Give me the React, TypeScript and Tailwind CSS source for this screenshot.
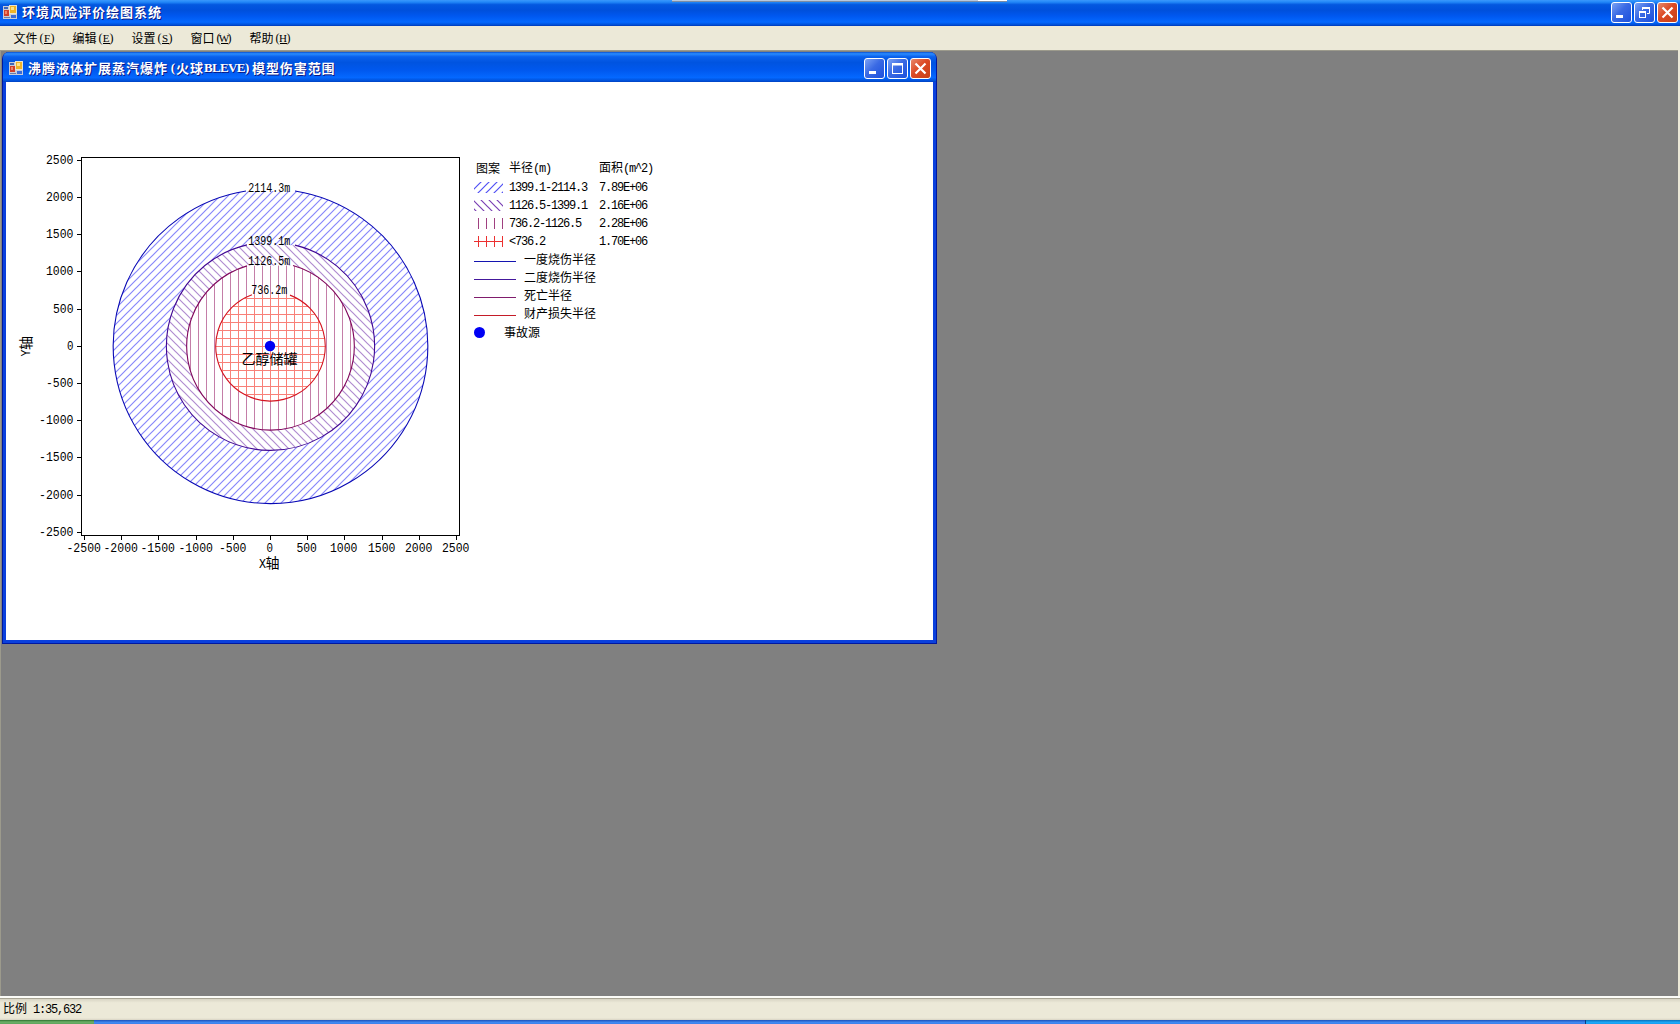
import React from "react";

const CJK = /([\u3000-\u9fff]+)/;

/* Mixed text: full-width CJK runs and half-width latin runs. */
function Mixed({ text }: { text: string }) {
  return (
    <span className="whitespace-pre font-['Noto_Sans_CJK_SC',sans-serif] text-[12px] leading-[14px]">
      {text.split(CJK).map((run, i) =>
        run === "" ? null : CJK.test(run) ? (
          <span key={i}>{run}</span>
        ) : (
          <span key={i} className="font-['Liberation_Mono',monospace] text-[12px] tracking-[-1.2px]">
            {run}
          </span>
        )
      )}
    </span>
  );
}

function AppIcon() {
  return (
    <svg width="14" height="14" viewBox="0 0 14 14" shapeRendering="crispEdges" className="shrink-0">
      <rect x="0" y="1" width="14" height="13" fill="#c8ccd8" />
      <rect x="1" y="5" width="5" height="6" fill="#d0402c" />
      <rect x="2" y="6" width="2" height="3" fill="#f08468" />
      <rect x="6" y="0" width="8" height="9" fill="#e8e4d0" />
      <rect x="7" y="1" width="6" height="7" fill="#f0b428" />
      <rect x="8" y="2" width="3" height="3" fill="#fce48c" />
      <rect x="8" y="10" width="5" height="3" fill="#3a6cd8" />
      <rect x="1" y="12" width="6" height="1" fill="#6c7ca8" />
      <rect x="1" y="2" width="4" height="2" fill="#4068b8" />
    </svg>
  );
}

type Kind = "min" | "restore" | "max" | "close";

function CaptionButton({ kind }: { kind: Kind }) {
  const skin =
    kind === "close"
      ? "bg-[linear-gradient(135deg,#e88a6c_0%,#dc4a24_45%,#c84018_100%)]"
      : "bg-[linear-gradient(135deg,#7ba2f4_0%,#3a6ae4_45%,#1c50dc_100%)]";
  return (
    <button className={`h-[21px] w-[21px] rounded-[3px] border border-white ${skin}`}>
      <svg width="19" height="19" viewBox="0 0 19 19" fill="none" stroke="#fff">
        {kind === "min" && <rect x="4" y="12" width="7" height="3" fill="#fff" stroke="none" />}
        {kind === "max" && (
          <>
            <rect x="4.5" y="4.5" width="10" height="10" />
            <path d="M4 5.5H15" strokeWidth="2" />
          </>
        )}
        {kind === "restore" && (
          <>
            <path d="M7.5 7V4.5H14.5V10.5H12" />
            <path d="M7 5H15" strokeWidth="2" />
            <rect x="4.5" y="8.5" width="6" height="6" />
            <path d="M4 9H11" strokeWidth="2" />
          </>
        )}
        {kind === "close" && <path d="M4.5 4.5L14.5 14.5M14.5 4.5L4.5 14.5" strokeWidth="2.2" />}
      </svg>
    </button>
  );
}

const MENUS = [
  ["文件", "F"],
  ["编辑", "E"],
  ["设置", "S"],
  ["窗口", "W"],
  ["帮助", "H"],
];

function MenuBar() {
  return (
    <div className="flex h-[24px] items-center bg-[#ece9d8] pl-[13.5px] text-black">
      {MENUS.map(([label, key]) => (
        <div key={key} className="flex w-[59px] items-center text-[12px] leading-[14px]">
          <span className="font-['Noto_Sans_CJK_SC',sans-serif]">{label}</span>
          <span className="w-[6px] text-right font-['Liberation_Serif',serif]">(</span>
          <span className="flex h-[12px] w-[7px] justify-center border-b border-black font-['Liberation_Serif',serif] text-[11px] leading-[12px]">
            {key}
          </span>
          <span className="w-[6px] font-['Liberation_Serif',serif]">)</span>
        </div>
      ))}
    </div>
  );
}

const CX = 270.5;
const CY = 346.3;
const SCALE = 0.0744;

const RINGS = [
  { r: 2114.3, gapL: 246, gapR: 295, stroke: "#0808b4", fill: "url(#hatchBlue)", base: 192 },
  { r: 1399.1, gapL: 247, gapR: 295, stroke: "#400894", fill: "url(#hatchPurple)", base: 245 },
  { r: 1126.5, gapL: 247, gapR: 293, stroke: "#80085c", fill: "url(#hatchWine)", base: 265 },
  { r: 736.2, gapL: 252, gapR: 290, stroke: "#d41420", fill: "url(#hatchRed)", base: 294 },
];

/* Circle outline left open at the top, where its label stands. */
function openCircle(radius: number, left: number, right: number) {
  const r = radius * SCALE;
  const y = (x: number) => CY - Math.sqrt(r * r - (x - CX) * (x - CX));
  return `M${right} ${y(right).toFixed(2)}A${r} ${r} 0 1 1 ${left} ${y(left).toFixed(2)}`;
}

const TICKS = [-2500, -2000, -1500, -1000, -500, 0, 500, 1000, 1500, 2000, 2500];

function Hatch({ id, color, d, crisp }: { id: string; color: string; d: string; crisp?: boolean }) {
  return (
    <pattern id={id} width="8" height="8" patternUnits="userSpaceOnUse">
      <path d={d} stroke={color} strokeWidth={crisp ? 1 : 1.2} fill="none" shapeRendering={crisp ? "crispEdges" : "auto"} />
    </pattern>
  );
}

const DIAG_UP = "M-2 10L10 -2M-2 2L2 -2M6 10L10 6";
const DIAG_DOWN = "M-2 -2L10 10M6 -2L10 2M-2 6L2 10";
const VERT = "M6.5 0V8";
const CROSS = "M6.5 0V8M0 2.5H8";

function Chart() {
  return (
    <svg width="465" height="556" viewBox="6 82 465 556" className="block shrink-0 overflow-visible">
      <defs>
        <Hatch id="hatchBlue" color="#8888fa" d={DIAG_UP} />
        <Hatch id="hatchPurple" color="#b08cd0" d={DIAG_DOWN} />
        <Hatch id="hatchWine" color="#c47ea8" d={VERT} crisp />
        <Hatch id="hatchRed" color="#f88078" d={CROSS} crisp />
        <Hatch id="keyBlue" color="#5050f4" d={DIAG_UP} />
        <Hatch id="keyPurple" color="#7a40b4" d={DIAG_DOWN} />
        <Hatch id="keyWine" color="#a04080" d={VERT} crisp />
        <Hatch id="keyRed" color="#ec3030" d={CROSS} crisp />
      </defs>
      <rect x="81.5" y="157.5" width="378" height="378" fill="none" stroke="#000" shapeRendering="crispEdges" />
      {RINGS.map((c) => {
        const d = openCircle(c.r, c.gapL, c.gapR);
        return (
          <g key={c.r}>
            <path d={d + "Z"} fill="#fff" />
            <path d={d + "Z"} fill={c.fill} />
            <path d={d} fill="none" stroke={c.stroke} strokeWidth="1.1" />
          </g>
        );
      })}
      <circle cx="270" cy="346" r="5.2" fill="#0000f4" />
      <g fontFamily="'Liberation Mono', monospace" fontSize="12">
        {RINGS.map((c) => {
          const s = `${c.r}m`;
          return (
            <text key={s} x={269.3 - s.length * 3} y={c.base} textLength={s.length * 6} lengthAdjust="spacingAndGlyphs">
              {s}
            </text>
          );
        })}
      </g>
      <g fontFamily="'Liberation Mono', monospace" fontSize="13">
        {TICKS.map((t) => {
          const s = String(t);
          const w = s.length * 7 - 0.5;
          const x = Math.floor(CX + t * SCALE) + 0.5;
          const y = Math.floor(CY - t * SCALE) + 0.5;
          return (
            <g key={t}>
              <path d={`M${x} 536V540M77 ${y}H81`} stroke="#000" shapeRendering="crispEdges" />
              <text x={x - w / 2 - 0.8} y="552" textLength={w} lengthAdjust="spacingAndGlyphs">
                {s}
              </text>
              <text x={73.5 - w} y={y + 3.4} textLength={w} lengthAdjust="spacingAndGlyphs">
                {s}
              </text>
            </g>
          );
        })}
      </g>
      <g fontFamily="'Liberation Mono', 'Noto Sans CJK SC', sans-serif" fontSize="14">
        <text x="241.5" y="363.5">乙醇储罐</text>
        <text x="259" y="568" fontSize="13" textLength="7" lengthAdjust="spacingAndGlyphs">X</text>
        <text x="265.5" y="568">轴</text>
        <g transform="translate(30.5 356.5) rotate(-90)">
          <text x="0" y="-0.5" fontSize="13" textLength="7" lengthAdjust="spacingAndGlyphs">Y</text>
          <text x="6.5" y="0">轴</text>
        </g>
      </g>
    </svg>
  );
}

const BANDS = [
  { fill: "url(#keyBlue)", top: 183, radius: "1399.1-2114.3", area: "7.89E+06" },
  { fill: "url(#keyPurple)", top: 201, radius: "1126.5-1399.1", area: "2.16E+06" },
  { fill: "url(#keyWine)", top: 219, radius: "736.2-1126.5", area: "2.28E+06" },
  { fill: "url(#keyRed)", top: 237, radius: "<736.2", area: "1.70E+06" },
];

const LINES = [
  { color: "bg-[#1414b0]", name: "一度烧伤半径" },
  { color: "bg-[#44189c]", name: "二度烧伤半径" },
  { color: "bg-[#801c6c]", name: "死亡半径" },
  { color: "bg-[#c41c28]", name: "财产损失半径" },
];

function Legend() {
  return (
    <div className="flex flex-col pl-[3px] pt-[76px] text-black">
      <div className="mb-px grid h-[19px] grid-cols-[35px_90px_80px] items-center">
        <span className="pl-[2px] leading-[0]"><Mixed text="图案" /></span>
        <span className="leading-[0]"><Mixed text="半径(m)" /></span>
        <span className="leading-[0]"><Mixed text="面积(m^2)" /></span>
      </div>
      {BANDS.map((b) => (
        <div key={b.area} className="grid h-[18px] grid-cols-[35px_90px_80px] items-center">
          <svg width="29" height="11" viewBox={`474 ${b.top} 29 11`} className="mt-px">
            <rect x="474" y={b.top} width="29" height="11" fill={b.fill} />
          </svg>
          <span className="leading-[0]"><Mixed text={b.radius} /></span>
          <span className="leading-[0]"><Mixed text={b.area} /></span>
        </div>
      ))}
      {LINES.map((l) => (
        <div key={l.name} className="flex h-[18px] items-center">
          <span className={`mt-[4px] h-px w-[42px] ${l.color}`} />
          <span className="pl-[8px] leading-[0]"><Mixed text={l.name} /></span>
        </div>
      ))}
      <div className="flex h-[20px] items-center">
        <span className="h-[11px] w-[11px] rounded-full bg-[#0000f4]" />
        <span className="pb-px pl-[19px] leading-[0]"><Mixed text="事故源" /></span>
      </div>
    </div>
  );
}

function ChildWindow() {
  return (
    <div className="flex h-[592px] w-[935px] flex-col rounded-t-[7px] border-x-[1px] border-b-[1px] border-[#0018a0] bg-[#0a48e0]">
      <div className="flex h-[30px] shrink-0 items-center rounded-t-[6px] bg-[linear-gradient(180deg,#0a50d0_0%,#2a8cff_6%,#0a60ec_16%,#0054e0_35%,#0058ee_60%,#0468ff_85%,#0050d8_96%,#0040c0_100%)] pl-[6px] pr-[5px] pt-[2px]">
        <AppIcon />
        <span className="flex whitespace-pre pl-[5px] font-['Noto_Sans_CJK_SC',sans-serif] text-[13px] font-bold leading-[18px] tracking-[1px] text-white [text-shadow:1px_1px_0_#0a1883]">
          <span>沸腾液体扩展蒸汽爆炸</span>
          <span className="w-[8px] text-right font-['Liberation_Serif',serif]">(</span>
          <span>火球</span>
          <span className="w-[41px] font-['Liberation_Serif',serif] text-[13px] tracking-[-0.7px]">BLEVE</span>
          <span className="w-[7px] font-['Liberation_Serif',serif]">)</span>
          <span className="tracking-[0.9px]">模型伤害范围</span>
        </span>
        <div className="ml-auto flex gap-[2px]">
          <CaptionButton kind="min" />
          <CaptionButton kind="max" />
          <CaptionButton kind="close" />
        </div>
      </div>
      <div className="flex grow border-x-[3px] border-b-[3px] border-[#0a40dc] bg-white">
        <Chart />
        <Legend />
      </div>
    </div>
  );
}

export default function App() {
  return (
    <div className="flex h-[1024px] w-[1680px] flex-col overflow-hidden bg-[#ece9d8]">
      <div className="relative flex h-[26px] shrink-0 items-center bg-[linear-gradient(180deg,#3a98fc_0%,#2288f8_8%,#0458e0_18%,#0050dc_40%,#0058f0_62%,#0468ff_85%,#0050d8_95%,#0038b8_100%)] pb-px pl-[3px] pr-[2px]">
        <div className="flex items-center pb-[2px]">
          <AppIcon />
          <span className="pl-[5px] font-['Noto_Sans_CJK_SC',sans-serif] text-[13px] font-bold leading-[18px] tracking-[1px] text-white [text-shadow:1px_1px_0_#0a1883]">
            环境风险评价绘图系统
          </span>
        </div>
        <div className="ml-auto flex gap-[2px]">
          <CaptionButton kind="min" />
          <CaptionButton kind="restore" />
          <CaptionButton kind="close" />
        </div>
        <div className="absolute left-[672px] top-0 flex h-[2px] w-[335px] border-b border-[#7c8ca4] bg-[#b8c8dc]">
          <span className="ml-auto h-px w-[29px] bg-white" />
        </div>
      </div>
      <MenuBar />
      <div className="mr-[2px] grow border-l border-t border-[#9c9a8c] bg-[#808080] pl-px pt-px">
        <ChildWindow />
      </div>
      <div className="h-[2px] shrink-0 bg-[#fcfcf8]" />
      <div className="flex h-[22px] shrink-0 items-center border-t border-[#a8a494] bg-[linear-gradient(180deg,#d8d4c4_0%,#ece9d8_18%,#ece9d8_90%,#d8d4c4_100%)] pb-px pl-[3px] text-black">
        <span className="leading-[0]"><Mixed text="比例 1:35,632" /></span>
      </div>
      <div className="flex h-[4px] shrink-0">
        <div className="w-[94px] bg-[linear-gradient(180deg,#2c7030_0%,#6cb068_50%,#5ca45c_100%)]" />
        <div className="grow bg-[linear-gradient(180deg,#1c50b8_0%,#4088f0_60%,#3a80ec_100%)]" />
        <div className="w-[95px] border-l border-[#0c3c80] bg-[linear-gradient(180deg,#0c70b8_0%,#1ca8f8_60%,#189cf0_100%)]" />
      </div>
    </div>
  );
}
